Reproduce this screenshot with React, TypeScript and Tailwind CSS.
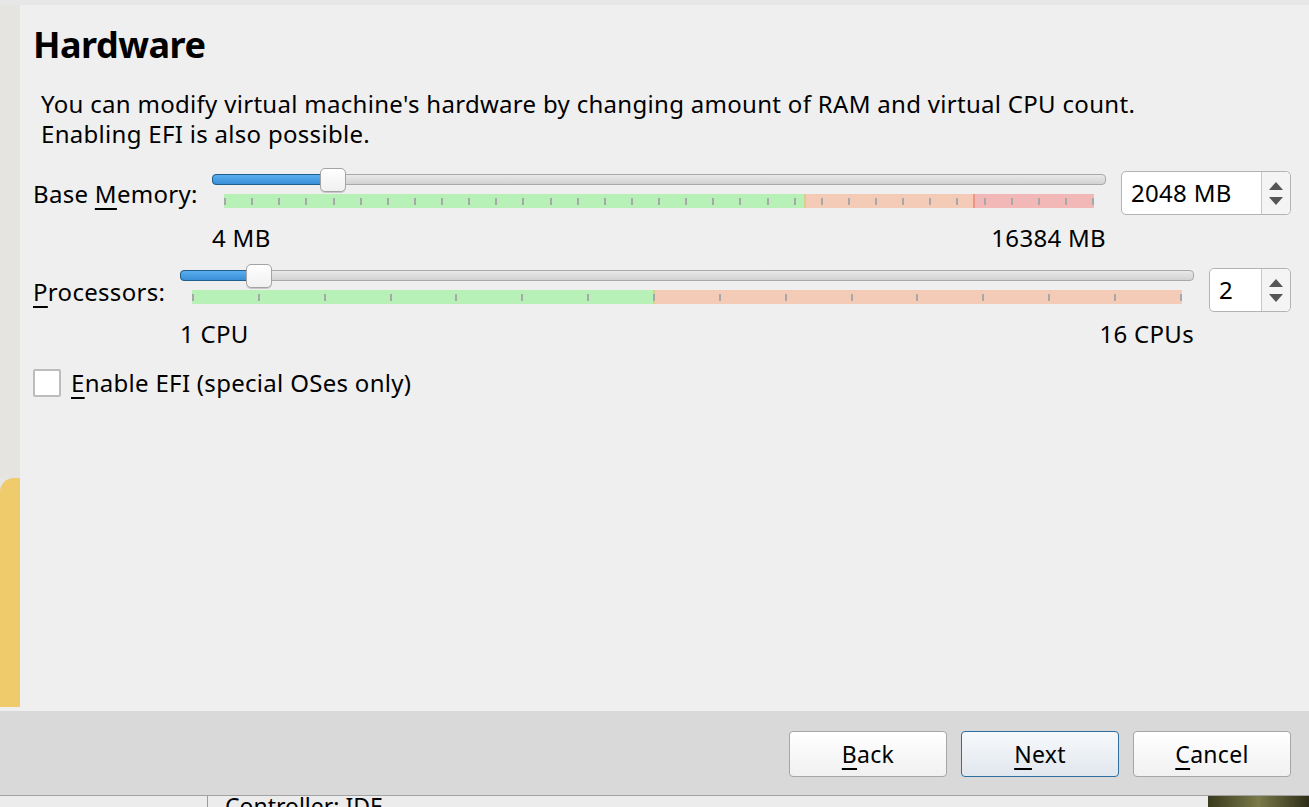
import React from "react";

const FONT = { fontFamily: '"Noto Sans", "Open Sans", sans-serif' };

function Ticks({ count }: { count: number }) {
  return (
    <div className="absolute inset-0 flex justify-between items-center">
      {Array.from({ length: count }).map((_, i) => (
        <span key={i} className="block w-[2px] h-[7px] bg-[#a8a8a8]" />
      ))}
    </div>
  );
}

function Slider({ fill, zones, ticks }: { fill: number; zones: { w: string; color: string; edge?: string }[]; ticks: number }) {
  return (
    <div className="flex flex-col">
      <div className="relative h-[24px]">
        <div className="absolute left-0 right-0 top-[6px] h-[11px] rounded-[4px] border border-[#a9a9a9] bg-gradient-to-b from-[#e9e9e9] to-[#d2d2d2]" />
        <div
          className="absolute left-0 top-[6px] h-[11px] rounded-[4px] border border-[#1f5f8e] bg-gradient-to-b from-[#5aaef0] to-[#3a8fd6]"
          style={{ width: fill + 8 }}
        />
        <div
          className="absolute top-0 w-[26px] h-[24px] rounded-[5px] border border-[#a3a3a3] bg-gradient-to-b from-white to-[#f0f0f0] shadow-[0_1px_0_#c8c8c8]"
          style={{ left: fill }}
        />
      </div>
      <div className="relative mx-[12px] mt-[2px] h-[14px] flex">
        {zones.map((z, i) => (
          <div key={i} className={`h-full ${z.w} ${z.color} ${z.edge ?? ""}`} />
        ))}
        <Ticks count={ticks} />
      </div>
    </div>
  );
}

function SpinBox({ value, width }: { value: string; width: string }) {
  return (
    <div className={`${width} h-[44px] flex rounded-[5px] border border-[#b3b3b3] bg-white`}>
      <div className="flex-1 flex items-center pl-[9px] text-[24px] tracking-[0.3px] text-black">{value}</div>
      <div className="w-[29px] border-l border-[#c8c8c8] flex flex-col items-center justify-center gap-[7px] bg-[#f4f4f4] rounded-r-[5px]">
        <svg width="14" height="8" viewBox="0 0 14 8"><path d="M0 8 L7 0 L14 8 Z" fill="#555" /></svg>
        <svg width="14" height="8" viewBox="0 0 14 8"><path d="M0 0 L14 0 L7 8 Z" fill="#555" /></svg>
      </div>
    </div>
  );
}

function Btn({ first, rest, primary }: { first: string; rest: string; primary?: boolean }) {
  return (
    <button
      className={`w-[158px] h-[46px] rounded-[4px] border text-[23px] tracking-[0.3px] text-black flex items-center justify-center ${
        primary
          ? "border-[#2f6f9f] bg-gradient-to-b from-[#f7f9fb] to-[#e1e7ee]"
          : "border-[#a6a6a6] bg-gradient-to-b from-white to-[#f1f1f1]"
      }`}
    >
      <span className="underline underline-offset-[5px] decoration-[2px]">{first}</span>
      {rest}
    </button>
  );
}

export default function App() {
  return (
    <div className="w-[1309px] h-[807px] overflow-hidden bg-[#e6e6e6] flex flex-col text-black" style={FONT}>
      <div className="h-[5px] bg-[#e7e7e7]" />
      <div className="flex h-[706px]">
        <div className="w-[20px] flex flex-col">
          <div className="h-[473px] bg-[#e6e4e0]" />
          <div className="flex-1 bg-[#f0cb6c] rounded-tl-[14px]" />
          <div className="h-[4px] bg-[#efefef]" />
        </div>
        <div className="flex-1 bg-[#efefef] pl-[13px] pr-[18px] pt-[16px] text-[24px] tracking-[0.3px]">
          <h1 className="text-[36px] font-bold leading-[48px] tracking-[-0.5px]">Hardware</h1>
          <p className="mt-[20px] ml-[8px] leading-[30px]">
            You can modify virtual machine's hardware by changing amount of RAM and virtual CPU count.
            <br />
            Enabling EFI is also possible.
          </p>

          <div className="flex mt-[19px]">
            <div className="w-[179px] leading-[30px] pt-[11px]">
              Base <span className="underline underline-offset-[5px] decoration-[2px]">M</span>emory:
            </div>
            <div className="w-[894px] flex flex-col">
              <Slider
                fill={108}
                ticks={33}
                zones={[
                  { w: "w-[582px]", color: "bg-[#b7f1b7]", edge: "border-r-[2px] border-[#d7cf8a]" },
                  { w: "w-[169px]", color: "bg-[#f4cbb6]", edge: "border-r-[2px] border-[#f09484]" },
                  { w: "flex-1", color: "bg-[#f2b7b7]" },
                ]}
              />
              <div className="flex justify-between mt-[15px] leading-[30px]">
                <span>4 MB</span>
                <span>16384 MB</span>
              </div>
            </div>
            <div className="ml-[15px] mt-[3px]">
              <SpinBox value="2048 MB" width="w-[170px]" />
            </div>
          </div>

          <div className="flex mt-[11px]">
            <div className="w-[147px] leading-[30px] pt-[13px]">
              <span className="underline underline-offset-[5px] decoration-[2px]">P</span>rocessors:
            </div>
            <div className="w-[1014px] flex flex-col">
              <Slider
                fill={66}
                ticks={16}
                zones={[
                  { w: "w-[463px]", color: "bg-[#b7f1b7]", edge: "border-r-[2px] border-[#d7cf8a]" },
                  { w: "flex-1", color: "bg-[#f4cbb6]" },
                ]}
              />
              <div className="flex justify-between mt-[15px] leading-[30px]">
                <span>1 CPU</span>
                <span>16 CPUs</span>
              </div>
            </div>
            <div className="ml-[15px] mt-[4px]">
              <SpinBox value="2" width="w-[82px]" />
            </div>
          </div>

          <label className="flex items-center mt-[19px] gap-[10px]">
            <span className="w-[28px] h-[28px] border-[2px] border-[#bdbdbd] bg-white rounded-[2px]" />
            <span className="leading-[30px]">
              <span className="underline underline-offset-[5px] decoration-[2px]">E</span>nable EFI (special OSes only)
            </span>
          </label>
        </div>
      </div>
      <div className="h-[84px] bg-[#d9d9d9] flex items-center justify-end gap-[14px] pr-[18px] pt-[2px]">
        <Btn first="B" rest="ack" />
        <Btn first="N" rest="ext" primary />
        <Btn first="C" rest="ancel" />
      </div>
      <div className="h-[1px] bg-[#a3a3a3]" />
      <div className="flex-1 flex bg-[#ececec] overflow-hidden">
        <div className="w-[207px]" />
        <div className="w-[1px] bg-[#9a9a9a]" />
        <div className="flex-1 pl-[17px] text-[23px] leading-[24px] -mt-[2px]">Controller: IDE</div>
        <div className="w-[101px] bg-gradient-to-r from-[#3a3a1e] via-[#7a7a4a] to-[#2e2e18]" />
      </div>
    </div>
  );
}
